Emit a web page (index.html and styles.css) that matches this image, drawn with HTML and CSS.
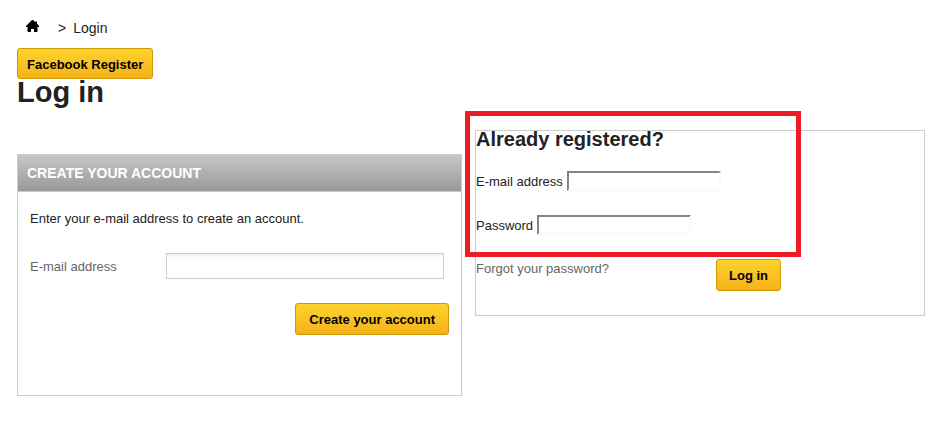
FILE: index.html
```
<!DOCTYPE html>
<html lang="en">
<head>
<meta charset="utf-8">
<meta name="viewport" content="width=device-width, initial-scale=1">
<title>Login</title>
<link rel="stylesheet" href="styles.css">
</head>
<body>
<main class="page">
  <nav class="breadcrumb" aria-label="Breadcrumb">
    <a class="home" href="#" aria-label="Home">
      <svg width="13" height="12" viewBox="0 0 13 12" aria-hidden="true"><path d="M6 0h1l2.500 2.300V1.500h1.500v2.200L13 6v1h-1.500v4.500L11 12H8V9H5v3H2l-.5-.5V7H0V6z"/></svg>
    </a>
    <span class="separator">&gt;</span>
    <span>Login</span>
  </nav>
  <button class="button button-compact" type="button">Facebook Register</button>
  <h1>Log in</h1>
  <div class="columns">
    <form class="panel create">
      <h2 class="panel-title">Create your account</h2>
      <div class="create-body">
        <p>Enter your e-mail address to create an account.</p>
        <div class="create-field">
          <label for="new-email">E-mail address</label>
          <input id="new-email" type="text">
        </div>
        <button class="button create-submit" type="submit">Create your account</button>
      </div>
    </form>
    <form class="panel login">
      <h2>Already registered?</h2>
      <div class="login-field">
        <label for="email">E-mail address</label>
        <input id="email" type="text">
      </div>
      <div class="login-field">
        <label for="password">Password</label>
        <input id="password" type="password">
      </div>
      <div class="login-actions">
        <a class="forgot" href="#">Forgot your password?</a>
        <button class="button" type="submit">Log in</button>
      </div>
      <div class="highlight"></div>
    </form>
  </div>
</main>
</body>
</html>
```
FILE: styles.css
```
* { box-sizing: border-box; }

body {
  margin: 0;
  background: #fff;
  color: #222;
  font: 13px/16px "Liberation Sans", Arial, sans-serif;
}

h1, h2, p { margin: 0; }

.page { padding: 16px 23px 32px 17px; }

.breadcrumb {
  display: flex;
  align-items: center;
  height: 24px;
  margin-bottom: 8px;
  padding-left: 9px;
  font-size: 14px;
}
.home { display: flex; margin: 0 19px 4px 0; color: #000; }
.home svg { fill: currentColor; }
.separator { margin-right: 7px; }

.button {
  display: block;
  height: 32px;
  padding: 2px 12px 0;
  border: 1px solid #cc9900;
  border-radius: 3px;
  background: linear-gradient(#fdd32b, #f5b21a);
  color: #000;
  font: bold 13px/16px "Liberation Sans", Arial, sans-serif;
}
.button-compact { height: 31px; padding: 2px 9px 0; }

h1 { font-size: 29px; line-height: 26px; }

.columns {
  display: grid;
  grid-template-columns: 445fr 450fr;
  align-items: start;
  gap: 13px;
  margin-top: 25px;
}

.panel { border: 1px solid #ccc; }

.create { margin-top: 24px; }
.panel-title {
  padding: 10px 9px;
  border-bottom: 1px solid #ccc;
  background: linear-gradient(#c6c6c6, #999);
  color: #fff;
  font-size: 14px;
  line-height: 16px;
  text-transform: uppercase;
}
.create-body { padding: 19px 12px 60px; }
.create-field {
  display: flex;
  align-items: center;
  margin: 26px 5px 24px 0;
  color: #666;
}
.create-field label { flex: 0 0 136px; padding-top: 2px; }
.create-field input {
  flex: 1;
  min-width: 0;
  height: 26px;
  padding: 0 4px;
  border: 1px solid #ccc;
  background: linear-gradient(#f0f0f0, #fff 4px);
}
.create-submit { margin-left: auto; padding: 2px 13px 0; }

.login { position: relative; padding-bottom: 24px; }
.login h2 { font-size: 20px; line-height: 16px; margin-bottom: 24px; }
.login-field {
  display: flex;
  align-items: center;
  gap: 4px;
  margin-bottom: 24px;
}
.login-field label { padding-top: 2px; }
.login-field input {
  width: 154px;
  height: 20px;
  padding: 0 2px;
  border: 2px solid;
  border-color: #848484 #fafafa #fafafa #848484;
  background: #fff;
}
.login-actions { display: grid; grid-template-columns: 240px auto; justify-content: start; }
.forgot { padding-top: 2px; color: #666; text-decoration: none; }

/* Marks the sign-in fields, overlapping the panel's edge. */
.highlight {
  position: absolute;
  top: -20px;
  left: -11px;
  width: 336px;
  height: 146px;
  border: 5px solid #ed1c24;
  pointer-events: none;
}
```
